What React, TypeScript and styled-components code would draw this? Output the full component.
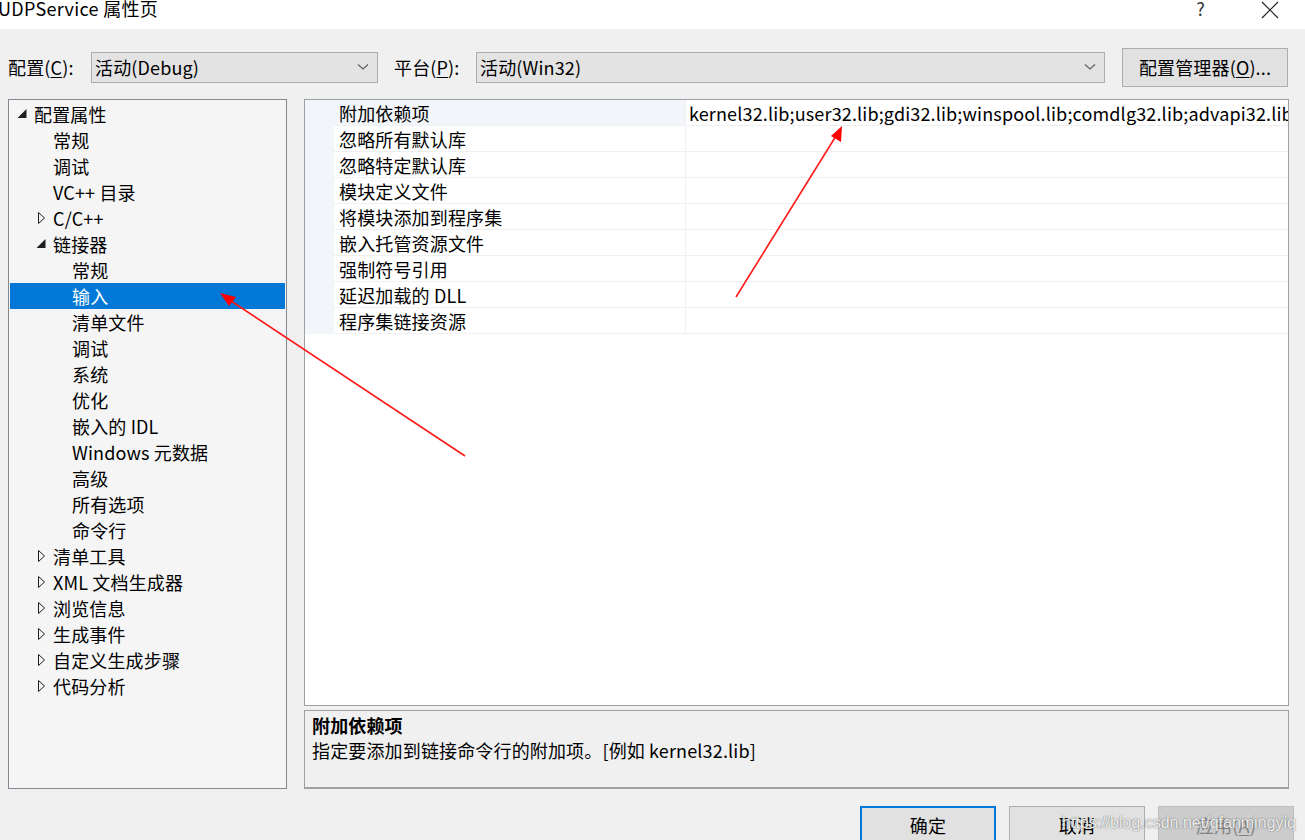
import React from "react";
import styled, { createGlobalStyle } from "styled-components";

const FONT = `"Segoe UI", "Noto Sans CJK SC", "Noto Sans", sans-serif`;

const GlobalStyle = createGlobalStyle`
  html, body { margin: 0; padding: 0; background: #f0f0f0; }
  body { font-family: ${FONT}; color: #000; }
  * { box-sizing: border-box; }
`;

const Window = styled.div`
  position: relative;
  width: 1305px;
  height: 840px;
  overflow: hidden;
  background: #f0f0f0;
  display: flex;
  flex-direction: column;
  font-size: 18px;
  letter-spacing: 0.15px;
`;

const TitleBar = styled.div`
  height: 29px;
  flex: none;
  background: #fff;
  display: flex;
  align-items: flex-start;
  justify-content: space-between;
`;

const TitleText = styled.div`
  margin-left: -2px;
  margin-top: -4px;
  font-size: 18px;
  line-height: 24px;
  letter-spacing: 0.3px;
  color: #000;
`;

const TitleButtons = styled.div`
  display: flex;
  align-items: flex-start;
  margin-top: -4px;
`;

const HelpGlyph = styled.span`
  font-size: 18px;
  line-height: 24px;
  color: #333;
  margin-right: 56px;
`;

const CloseBox = styled.span`
  width: 18px;
  height: 18px;
  margin-top: 2px;
  margin-right: 26px;
  display: block;
`;

const ConfigRow = styled.div`
  margin-top: 19px;
  height: 39px;
  flex: none;
  display: flex;
  align-items: center;
  padding-left: 8px;
`;

const FieldLabel = styled.div<{ $w: number; $indent?: number }>`
  width: ${(p) => p.$w}px;
  padding-left: ${(p) => p.$indent ?? 0}px;
  flex: none;
  line-height: 26px;
  margin-top: -2px;
`;

const Combo = styled.div<{ $w: number }>`
  width: ${(p) => p.$w}px;
  height: 31px;
  flex: none;
  background: #e3e3e3;
  border: 1px solid #adadad;
  display: flex;
  align-items: center;
  justify-content: space-between;
  padding: 0 8px 2px 3px;
  line-height: 26px;
`;

const ManagerButton = styled.div`
  margin-left: 17px;
  width: 166px;
  height: 39px;
  flex: none;
  background: #e1e1e1;
  border: 1px solid #adadad;
  display: flex;
  align-items: center;
  justify-content: center;
  padding-bottom: 2px;
`;

const Main = styled.div`
  margin-top: 12px;
  height: 690px;
  flex: none;
  display: flex;
  padding-left: 8px;
`;

const Tree = styled.div`
  width: 279px;
  flex: none;
  background: #f5f5f5;
  border: 1px solid #828790;
  padding: 1px;
`;

const TreeRow = styled.div<{ $level: number; $selected?: boolean }>`
  height: 26px;
  display: flex;
  align-items: center;
  padding-left: ${(p) => 6 + p.$level * 19}px;
  background: ${(p) => (p.$selected ? "#0078d7" : "transparent")};
  color: ${(p) => (p.$selected ? "#fff" : "#000")};
  white-space: nowrap;
`;

const IconSlot = styled.svg`
  width: 18px;
  height: 26px;
  flex: none;
`;

const RightColumn = styled.div`
  margin-left: 17px;
  width: 985px;
  flex: none;
  display: flex;
  flex-direction: column;
  gap: 4px;
`;

const Grid = styled.div`
  height: 607px;
  flex: none;
  background: #fff;
  border: 1px solid #a0a0a0;
  overflow: hidden;
`;

const GridRow = styled.div`
  height: 26px;
  display: flex;
`;

const MarginCell = styled.div`
  width: 29px;
  flex: none;
  background: #f2f5fa;
`;

const LabelCell = styled.div<{ $active?: boolean }>`
  width: 352px;
  flex: none;
  padding-left: 5px;
  line-height: 26px;
  background: ${(p) => (p.$active ? "#f2f5fa" : "#fff")};
  border-bottom: 1px solid #f0f0f0;
  border-right: 1px solid #f0f0f0;
  white-space: nowrap;
`;

const ValueCell = styled.div`
  flex: 1;
  padding-left: 3px;
  line-height: 26px;
  border-bottom: 1px solid #f0f0f0;
  white-space: nowrap;
  overflow: hidden;
`;

const Description = styled.div`
  height: 79px;
  flex: none;
  background: #f0f0f0;
  border: 1px solid #a0a0a0;
  border-bottom: 2px solid #a0a0a0;
  padding: 2px 7px;
`;

const DescTitle = styled.div`
  font-weight: bold;
  line-height: 24px;
`;

const DescText = styled.div`
  line-height: 26px;
`;

const ButtonBar = styled.div`
  margin-top: 17px;
  display: flex;
  padding-left: 860px;
  gap: 13px;
`;

const DialogButton = styled.div<{ $primary?: boolean; $disabled?: boolean }>`
  width: 136px;
  height: 40px;
  flex: none;
  background: ${(p) => (p.$disabled ? "#cccccc" : "#e1e1e1")};
  border: ${(p) => (p.$primary ? "2px solid #0078d7" : p.$disabled ? "1px solid #bfbfbf" : "1px solid #adadad")};
  color: ${(p) => (p.$disabled ? "#838383" : "#000")};
  display: flex;
  justify-content: center;
  padding-top: ${(p) => (p.$primary ? 4 : 5)}px;
  line-height: 26px;
`;

const Overlay = styled.svg`
  position: absolute;
  left: 0;
  top: 0;
  width: 1305px;
  height: 840px;
  pointer-events: none;
`;

const Watermark = styled.div`
  position: absolute;
  left: 1062px;
  top: 812px;
  font-family: "Liberation Sans", Arial, sans-serif;
  font-size: 16px;
  letter-spacing: 0;
  line-height: 22px;
  color: rgba(255, 255, 255, 0.9);
  text-shadow: 0 0 1px rgba(90, 90, 90, 0.9), 0 0 2px rgba(120, 120, 120, 0.5);
  white-space: nowrap;
  pointer-events: none;
`;

type Node = { label: string; level: number; icon?: "open" | "closed"; selected?: boolean };

const treeNodes: Node[] = [
  { label: "配置属性", level: 0, icon: "open" },
  { label: "常规", level: 1 },
  { label: "调试", level: 1 },
  { label: "VC++ 目录", level: 1 },
  { label: "C/C++", level: 1, icon: "closed" },
  { label: "链接器", level: 1, icon: "open" },
  { label: "常规", level: 2 },
  { label: "输入", level: 2, selected: true },
  { label: "清单文件", level: 2 },
  { label: "调试", level: 2 },
  { label: "系统", level: 2 },
  { label: "优化", level: 2 },
  { label: "嵌入的 IDL", level: 2 },
  { label: "Windows 元数据", level: 2 },
  { label: "高级", level: 2 },
  { label: "所有选项", level: 2 },
  { label: "命令行", level: 2 },
  { label: "清单工具", level: 1, icon: "closed" },
  { label: "XML 文档生成器", level: 1, icon: "closed" },
  { label: "浏览信息", level: 1, icon: "closed" },
  { label: "生成事件", level: 1, icon: "closed" },
  { label: "自定义生成步骤", level: 1, icon: "closed" },
  { label: "代码分析", level: 1, icon: "closed" },
];

const gridRows = [
  { label: "附加依赖项", value: "kernel32.lib;user32.lib;gdi32.lib;winspool.lib;comdlg32.lib;advapi32.lib;shell32.lib;ole32.lib;oleaut32.lib;uuid.lib;odbc32.lib;odbccp32.lib;%(AdditionalDependencies)" },
  { label: "忽略所有默认库", value: "" },
  { label: "忽略特定默认库", value: "" },
  { label: "模块定义文件", value: "" },
  { label: "将模块添加到程序集", value: "" },
  { label: "嵌入托管资源文件", value: "" },
  { label: "强制符号引用", value: "" },
  { label: "延迟加载的 DLL", value: "" },
  { label: "程序集链接资源", value: "" },
];

const Chevron = () => (
  <svg width="12" height="8" viewBox="0 0 12 8">
    <polyline points="1,1.5 6,6 11,1.5" fill="none" stroke="#606060" strokeWidth="1.2" />
  </svg>
);

const TreeIcon = ({ kind }: { kind?: "open" | "closed" }) => (
  <IconSlot viewBox="0 0 18 26">
    {kind === "open" && <polygon points="1.5,17 10.5,17 10.5,8" fill="#1e1e1e" />}
    {kind === "closed" && (
      <polygon points="3.5,7.5 9.5,13 3.5,18.5" fill="none" stroke="#1e1e1e" strokeWidth="1" />
    )}
  </IconSlot>
);

const Under = styled.span`
  text-decoration: underline;
  text-underline-offset: 2px;
`;

export default function App() {
  return (
    <>
      <GlobalStyle />
      <Window>
        <TitleBar>
          <TitleText>UDPService 属性页</TitleText>
          <TitleButtons>
            <HelpGlyph>?</HelpGlyph>
            <CloseBox>
              <svg width="18" height="18" viewBox="0 0 18 18">
                <path d="M1 1 L17 17 M17 1 L1 17" stroke="#222" strokeWidth="1.2" />
              </svg>
            </CloseBox>
          </TitleButtons>
        </TitleBar>

        <ConfigRow>
          <FieldLabel $w={83}>
            配置(<Under>C</Under>):
          </FieldLabel>
          <Combo $w={287}>
            <span>活动(Debug)</span>
            <Chevron />
          </Combo>
          <FieldLabel $w={98} $indent={16}>
            平台(<Under>P</Under>):
          </FieldLabel>
          <Combo $w={629}>
            <span>活动(Win32)</span>
            <Chevron />
          </Combo>
          <ManagerButton>
            配置管理器(<Under>O</Under>)...
          </ManagerButton>
        </ConfigRow>

        <Main>
          <Tree>
            {treeNodes.map((n, i) => (
              <TreeRow key={i} $level={n.level} $selected={n.selected}>
                <TreeIcon kind={n.icon} />
                <span>{n.label}</span>
              </TreeRow>
            ))}
          </Tree>
          <RightColumn>
            <Grid>
              {gridRows.map((r, i) => (
                <GridRow key={i}>
                  <MarginCell />
                  <LabelCell $active={i === 0}>{r.label}</LabelCell>
                  <ValueCell>{r.value}</ValueCell>
                </GridRow>
              ))}
            </Grid>
            <Description>
              <DescTitle>附加依赖项</DescTitle>
              <DescText>指定要添加到链接命令行的附加项。[例如 kernel32.lib]</DescText>
            </Description>
          </RightColumn>
        </Main>

        <ButtonBar>
          <DialogButton $primary>确定</DialogButton>
          <DialogButton>取消</DialogButton>
          <DialogButton $disabled>
            应用(<Under>A</Under>)
          </DialogButton>
        </ButtonBar>

        <Overlay viewBox="0 0 1305 840">
          <line x1="465" y1="456" x2="228" y2="299" stroke="#ff1a1a" strokeWidth="1.6" />
          <polygon points="220,293 236,297 229,306" fill="#ff0000" />
          <line x1="736" y1="297" x2="836" y2="136" stroke="#ff1a1a" strokeWidth="1.6" />
          <polygon points="842,126 841,142 831,136" fill="#ff0000" />
        </Overlay>
        <Watermark>https://blog.csdn.net/qfanmingyiq</Watermark>
      </Window>
    </>
  );
}
